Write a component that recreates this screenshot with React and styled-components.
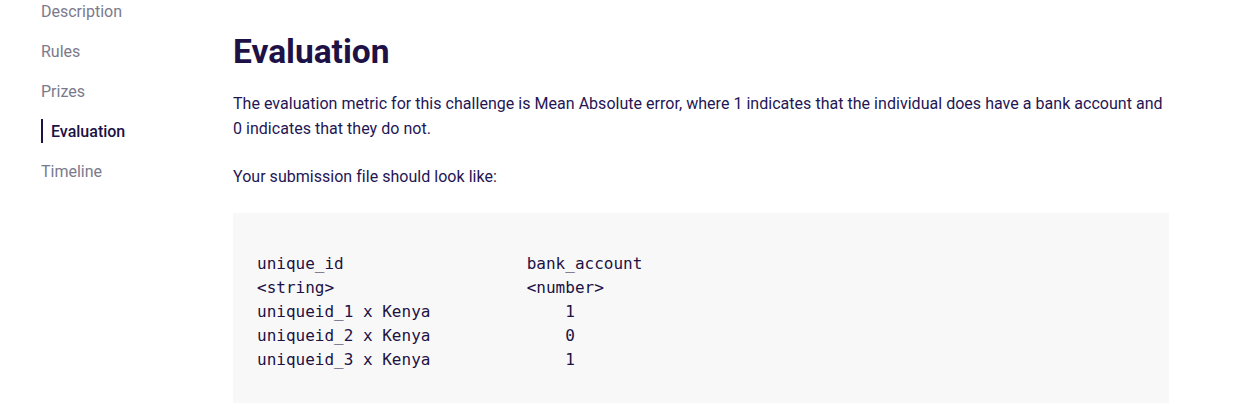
import React from "react";
import styled, { createGlobalStyle } from "styled-components";

const Global = createGlobalStyle`
  html, body { margin: 0; padding: 0; background: #ffffff; }
  body { font-family: Roboto, "Liberation Sans", sans-serif; }
`;

const Page = styled.div`
  display: grid;
  grid-template-columns: 192px 936px;
  padding-left: 41px;
  width: 1237px;
  height: 403px;
  overflow: hidden;
  box-sizing: border-box;
`;

const Nav = styled.nav`
  display: flex;
  flex-direction: column;
`;

const NavItem = styled.div`
  height: 40px;
  display: flex;
  align-items: center;
  margin-top: ${(p) => (p.$first ? "-9px" : "0")};
  font-size: 16px;
  color: ${(p) => (p.$active ? "#1d1146" : "#7a7a8c")};
  font-weight: ${(p) => (p.$active ? 500 : 400)};
`;

const ActiveMark = styled.span`
  display: inline-block;
  width: 2px;
  height: 24px;
  background: #1d1146;
  margin-right: 8px;
`;

const Main = styled.main`
  display: flex;
  flex-direction: column;
  color: #241655;
`;

const Title = styled.h1`
  margin: 30px 0 0;
  font-size: 33.5px;
  line-height: 44px;
  font-weight: 700;
  color: #1d1146;
`;

const Para = styled.p`
  margin: ${(p) => (p.$top ? p.$top : "0")} 0 0;
  font-size: 16px;
  line-height: 25px;
  letter-spacing: 0.03px;
`;

const Code = styled.pre`
  margin: 24px 0 0;
  background: #f8f8f8;
  padding: 39px 24px 40px;
  font-family: "DejaVu Sans Mono", monospace;
  font-size: 16px;
  line-height: 24px;
  color: #1d1146;
`;

const items = ["Description", "Rules", "Prizes", "Evaluation", "Timeline"];

const code = [
  "unique_id                   bank_account",
  "<string>                    <number>",
  "uniqueid_1 x Kenya              1",
  "uniqueid_2 x Kenya              0",
  "uniqueid_3 x Kenya              1",
].join("\n");

export default function App() {
  return (
    <>
      <Global />
      <Page>
        <Nav>
          {items.map((it, i) => (
            <NavItem key={it} $first={i === 0} $active={it === "Evaluation"}>
              {it === "Evaluation" && <ActiveMark />}
              {it}
            </NavItem>
          ))}
        </Nav>
        <Main>
          <Title>Evaluation</Title>
          <Para $top="17px">
            The evaluation metric for this challenge is Mean Absolute error, where 1 indicates that the individual does have a bank account and 0 indicates that they do not.
          </Para>
          <Para $top="23px">Your submission file should look like:</Para>
          <Code>{code}</Code>
        </Main>
      </Page>
    </>
  );
}
